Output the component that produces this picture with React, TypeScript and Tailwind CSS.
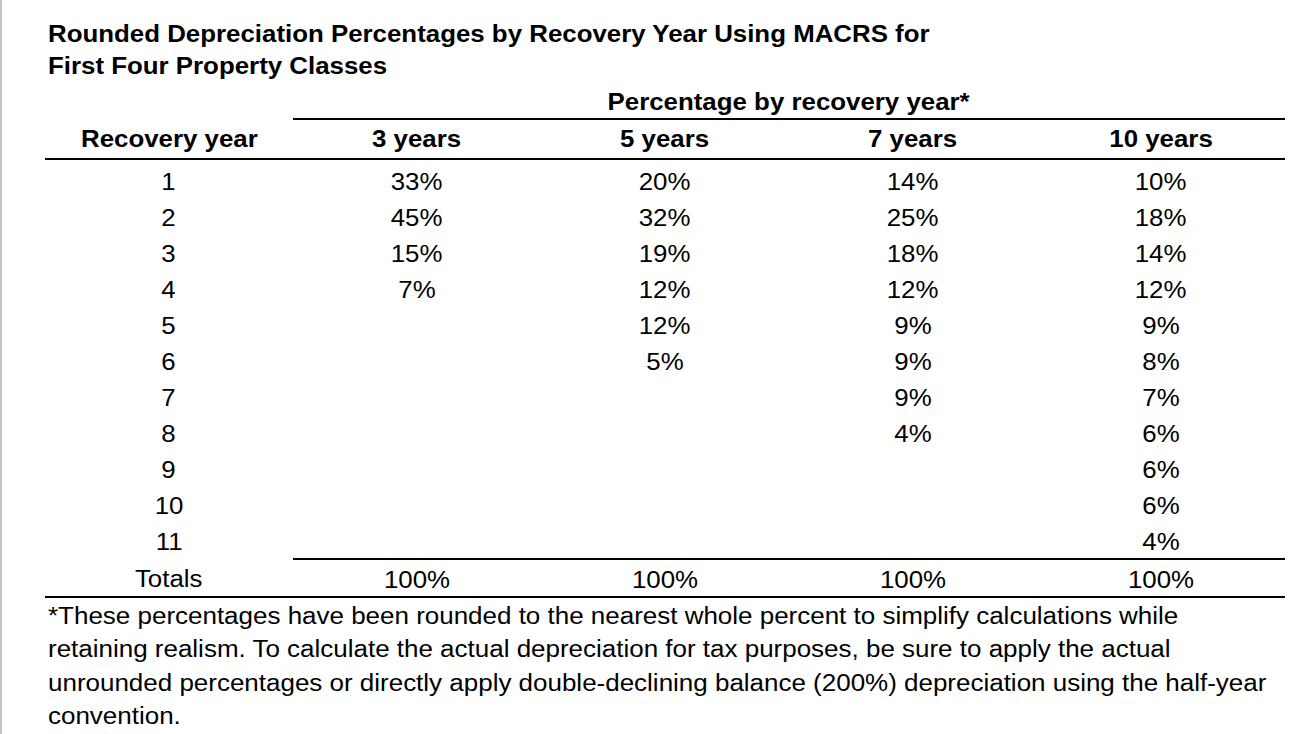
import React from "react";

const rows: string[][] = [
  ["1", "33%", "20%", "14%", "10%"],
  ["2", "45%", "32%", "25%", "18%"],
  ["3", "15%", "19%", "18%", "14%"],
  ["4", "7%", "12%", "12%", "12%"],
  ["5", "", "12%", "9%", "9%"],
  ["6", "", "5%", "9%", "8%"],
  ["7", "", "", "9%", "7%"],
  ["8", "", "", "4%", "6%"],
  ["9", "", "", "", "6%"],
  ["10", "", "", "", "6%"],
  ["11", "", "", "", "4%"],
];

function T({ children }: { children: React.ReactNode }) {
  return <span className="inline-block whitespace-nowrap scale-x-[1.1]">{children}</span>;
}

export default function App() {
  return (
    <div
      className="w-[1312px] h-[734px] bg-white border-l-2 border-[#c4c4c4] text-black overflow-hidden"
      style={{ fontFamily: '"Liberation Sans", Arial, Helvetica, sans-serif' }}
    >
      <div className="pl-[43px] pt-[19px] w-[1283px]">
        <div className="pl-[3px]">
          <h1 className="origin-left scale-x-[1.1] whitespace-nowrap text-[23.5px] leading-[31.5px] font-bold">
            Rounded Depreciation Percentages by Recovery Year Using MACRS for
            <br />
            First Four Property Classes
          </h1>
        </div>
        <div className="grid grid-cols-5 mt-[2px] text-[23.5px] text-center">
          <div />
          <div className="col-span-4 border-b-2 border-black leading-[34px] h-[36px] pt-[1px] font-bold">
            <T>Percentage by recovery year*</T>
          </div>
          <div className="col-span-5 grid grid-cols-5 border-b-2 border-black font-bold h-[40px] pt-[2px] items-center">
            <div><T>Recovery year</T></div>
            <div><T>3 years</T></div>
            <div><T>5 years</T></div>
            <div><T>7 years</T></div>
            <div><T>10 years</T></div>
          </div>
          <div className="col-span-5 pt-[2px]">
            {rows.map((r, i) => (
              <div key={i} className="grid grid-cols-5 h-[36px] pt-[3px] items-center">
                {r.map((c, j) => (
                  <div key={j}>{c ? <T>{c}</T> : null}</div>
                ))}
              </div>
            ))}
          </div>
          <div className="col-span-5 grid grid-cols-5 border-b-2 border-black h-[40px]">
            <div className="flex items-center justify-center pt-[3px]"><T>Totals</T></div>
            <div className="col-span-4 grid grid-cols-4 border-t-2 border-black items-center pt-[3px]">
              <div><T>100%</T></div>
              <div><T>100%</T></div>
              <div><T>100%</T></div>
              <div><T>100%</T></div>
            </div>
          </div>
        </div>
        <div className="pl-[3px] pt-[2px]">
          <p className="origin-left scale-x-[1.105] whitespace-nowrap text-[23.5px] leading-[33.3px]">
            *These percentages have been rounded to the nearest whole percent to simplify calculations while
            <br />
            retaining realism. To calculate the actual depreciation for tax purposes, be sure to apply the actual
            <br />
            unrounded percentages or directly apply double-declining balance (200%) depreciation using the half-year
            <br />
            convention.
          </p>
        </div>
      </div>
    </div>
  );
}
